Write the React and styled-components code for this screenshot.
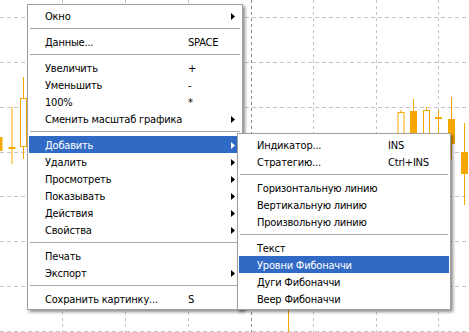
import React from 'react';
import styled, { createGlobalStyle } from 'styled-components';

const FONT = '"DejaVu Sans Condensed", "DejaVu Sans", sans-serif';

const GlobalStyle = createGlobalStyle`
  body {
    margin: 0;
    background: #ffffff;
    font-family: ${FONT};
  }
`;

const GRID_Y = [17, 62, 107, 152, 196, 241, 286, 331];
const GRID_X = [62, 125, 188, 251, 313, 376, 438];

// x = centre, body = [top, bottom], wick = [top, bottom]
const CANDLES = [
  { x: -1, body: [137, 150], wick: [137, 150], filled: true },
  { x: 12, body: [147, 149], wick: [107, 164], filled: true, doji: true },
  { x: 23.5, body: [98, 146], wick: [77, 159], filled: false },
  { x: 401, body: [112, 150], wick: [110, 150], filled: false },
  { x: 413.5, body: [111, 150], wick: [99, 150], filled: true },
  { x: 426.5, body: [110, 150], wick: [107, 150], filled: false },
  { x: 438.5, body: [117, 119], wick: [110, 150], filled: true, doji: true },
  { x: 451.5, body: [119, 143], wick: [97, 160], filled: true },
  { x: 464.5, body: [152, 173], wick: [123, 205], filled: true },
  { x: 288.5, body: [300, 300], wick: [290, 332], filled: true, doji: true },
];

const MAIN_ITEMS = [
  { label: 'Окно', sub: true },
  { sep: true },
  { label: 'Данные...', key: 'SPACE' },
  { sep: true },
  { label: 'Увеличить', key: '+' },
  { label: 'Уменьшить', key: '-' },
  { label: '100%', key: '*' },
  { label: 'Сменить масштаб графика', sub: true },
  { sep: true },
  { label: 'Добавить', sub: true, active: true },
  { label: 'Удалить', sub: true },
  { label: 'Просмотреть', sub: true },
  { label: 'Показывать', sub: true },
  { label: 'Действия', sub: true },
  { label: 'Свойства', sub: true },
  { sep: true },
  { label: 'Печать' },
  { label: 'Экспорт', sub: true },
  { sep: true },
  { label: 'Сохранить картинку...', key: 'S' },
];

const ADD_ITEMS = [
  { label: 'Индикатор...', key: 'INS' },
  { label: 'Стратегию...', key: 'Ctrl+INS' },
  { sep: true },
  { label: 'Горизонтальную линию' },
  { label: 'Вертикальную линию' },
  { label: 'Произвольную линию' },
  { sep: true },
  { label: 'Текст' },
  { label: 'Уровни Фибоначчи', active: true },
  { label: 'Дуги Фибоначчи' },
  { label: 'Веер Фибоначчи' },
];

const Chart = () => (
  <ChartSvg width="469" height="332" viewBox="0 0 469 332">
    {GRID_Y.map((y) => (
      <line key={`h${y}`} x1="0" x2="469" y1={y + 0.5} y2={y + 0.5} stroke="#c4c4c4" strokeDasharray="4 3" />
    ))}
    {GRID_X.map((x) => (
      <line
        key={`v${x}`}
        x1={x + 0.5}
        x2={x + 0.5}
        y1="0"
        y2="332"
        stroke={x === 251 ? '#8a8a8a' : '#c4c4c4'}
        strokeDasharray="3 3"
      />
    ))}
    {CANDLES.map((c, i) => (
      <g key={i} stroke="#f7a800" fill={c.filled ? '#f7a800' : '#ffffff'}>
        <line x1={c.x} x2={c.x} y1={c.wick[0]} y2={c.wick[1]} strokeWidth="1" />
        {c.doji ? (
          <rect x={c.x - 3.5} y={c.body[0]} width="7" height="2" stroke="none" />
        ) : (
          <rect x={c.x - 3} y={c.body[0] + 0.5} width="6" height={c.body[1] - c.body[0]} />
        )}
      </g>
    ))}
  </ChartSvg>
);

const Arrow = ({ active }) => (
  <svg width="4" height="7" viewBox="0 0 4 7">
    <path d="M0 0 L4 3.5 L0 7 Z" fill={active ? '#ffffff' : '#000000'} />
  </svg>
);

const Menu = ({ items, left, top, width, pad, labelWidth, hasArrows }) => (
  <MenuBox $left={left} $top={top} $width={width}>
    {items.map((it, i) =>
      it.sep ? (
        <Separator key={i} />
      ) : (
        <Row key={i} $active={it.active} $pad={pad} $label={labelWidth} $arrows={hasArrows}>
          <span>{it.label}</span>
          <span>{it.key}</span>
          {hasArrows && <ArrowCell>{it.sub && <Arrow active={it.active} />}</ArrowCell>}
        </Row>
      )
    )}
  </MenuBox>
);

const App = () => (
  <Screen>
    <GlobalStyle />
    <Chart />
    <Menu items={MAIN_ITEMS} left={27} top={4} width={216} pad={16} labelWidth={143} hasArrows />
    <Menu items={ADD_ITEMS} left={237} top={133} width={214} pad={18} labelWidth={131} />
  </Screen>
);

const Screen = styled.div`
  position: relative;
  width: 469px;
  height: 332px;
  overflow: hidden;
  background: #ffffff;
`;

const ChartSvg = styled.svg`
  display: block;
`;

const MenuBox = styled.div`
  position: absolute;
  left: ${(p) => p.$left}px;
  top: ${(p) => p.$top}px;
  width: ${(p) => p.$width}px;
  box-sizing: border-box;
  padding: 2px 1px;
  background: #ffffff;
  border: 1px solid #a0a0a0;
  box-shadow: 2px 2px 3px rgba(0, 0, 0, 0.45);
`;

const Row = styled.div`
  display: grid;
  grid-template-columns: ${(p) => p.$label}px 1fr ${(p) => (p.$arrows ? '4px' : '')};
  align-items: center;
  height: 17px;
  padding: 1px 6px 0 ${(p) => p.$pad}px;
  box-sizing: border-box;
  font-size: 11px;
  letter-spacing: -0.2px;
  white-space: nowrap;
  color: ${(p) => (p.$active ? '#ffffff' : '#000000')};
  background: ${(p) => (p.$active ? '#316ac5' : 'transparent')};
`;

const ArrowCell = styled.span`
  display: flex;
  align-items: center;
  height: 7px;
`;

const Separator = styled.div`
  height: 9px;
  display: flex;
  align-items: center;
  padding: 0 1px;

  &::after {
    content: '';
    flex: 1;
    height: 1px;
    background: #a7a7a7;
  }
`;

export default App;
